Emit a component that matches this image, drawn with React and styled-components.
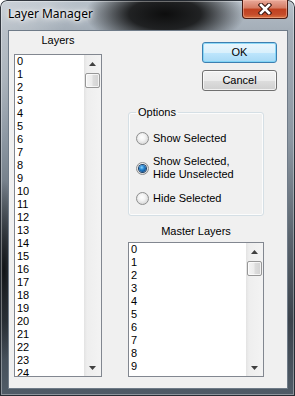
import React from 'react';
import styled, { createGlobalStyle } from 'styled-components';

const Global = createGlobalStyle`
  html, body { margin: 0; padding: 0; background: #ffffff; }
  body { width: 295px; height: 396px; overflow: hidden; }
  * { box-sizing: border-box; }
`;

const Window = styled.div`
  width: 295px;
  height: 396px;
  display: flex;
  flex-direction: column;
  padding: 0 7px 7px 8px;
  border-radius: 7px 7px 0 0;
  box-shadow: inset 0 0 0 1px rgba(20, 26, 34, 0.85), inset 0 0 0 2px rgba(255, 255, 255, 0.35);
  background:
    linear-gradient(118deg, rgba(255,255,255,0.28) 0px, rgba(255,255,255,0.18) 40px, rgba(255,255,255,0) 70px),
    radial-gradient(ellipse 80px 34px at 165px 14px, rgba(8,8,8,0.97) 0%, rgba(8,8,8,0.85) 45%, rgba(8,8,8,0) 100%),
    radial-gradient(ellipse 14px 90px at 4px 270px, rgba(10,12,14,0.9) 0%, rgba(10,12,14,0) 100%),
    linear-gradient(180deg, #b8c1ca 0px, #a4aeb8 30px, #8c97a2 140px, #59636d 240px, #3b434c 320px, #505c68 396px);
  font-family: "Liberation Sans", Arial, sans-serif;
`;

const TitleBar = styled.div`
  height: 30px;
  display: flex;
  justify-content: space-between;
  align-items: flex-start;
  flex-shrink: 0;
`;

const Title = styled.div`
  margin-top: 6px;
  font-family: "Noto Sans", "Open Sans", sans-serif;
  font-size: 12px;
  line-height: 16px;
  color: #000;
  text-shadow: 0 0 6px #fff, 0 0 10px rgba(255,255,255,0.9), 0 0 3px rgba(255,255,255,0.9);
`;

const CloseButton = styled.div`
  width: 46px;
  height: 19px;
  border: 1px solid #4a1a12;
  border-top: none;
  border-radius: 0 0 4px 4px;
  background: linear-gradient(180deg, #e9a99a 0%, #d47a62 45%, #c0401f 50%, #c54b2a 80%, #d9733f 100%);
  box-shadow: inset 0 0 0 1px rgba(255, 200, 180, 0.45);
  display: flex;
  align-items: center;
  justify-content: center;
`;

const Client = styled.div`
  flex: 1;
  background: #f0f0f0;
  border: 1px solid #6f7b88;
  display: flex;
  padding: 3px 9px 0 5px;
`;

const LeftColumn = styled.div`
  width: 88px;
  display: flex;
  flex-direction: column;
`;

const RightColumn = styled.div`
  margin-left: 26px;
  width: 149px;
  display: flex;
  flex-direction: column;
`;

const Label = styled.div`
  font-size: 11px;
  line-height: 13px;
  color: #000;
  text-align: center;
`;

const ListBox = styled.div`
  margin-top: ${p => p.$gap}px;
  height: ${p => p.$h}px;
  width: ${p => p.$w}px;
  border: 1px solid #828790;
  background: #fff;
  display: flex;
  overflow: hidden;
`;

const Items = styled.div`
  flex: 1;
  overflow: hidden;
  padding-left: 2px;
`;

const Item = styled.div`
  font-size: 11px;
  line-height: 13px;
  height: 13px;
  color: #000;
  white-space: nowrap;
`;

const ScrollBar = styled.div`
  width: 17px;
  display: flex;
  flex-direction: column;
  background: linear-gradient(90deg, #e3e3e3 0px, #eeeeee 3px, #f3f3f3 100%);
`;

const ArrowButton = styled.div`
  height: 17px;
  display: flex;
  align-items: center;
  justify-content: center;
  flex-shrink: 0;
`;

const Track = styled.div`
  flex: 1;
  padding: 1px 1px 0 1px;
`;

const Thumb = styled.div`
  height: 15px;
  border: 1px solid #979797;
  border-radius: 2px;
  background: linear-gradient(90deg, #f4f4f4 0%, #ececec 45%, #dcdcdc 55%, #d2d2d2 100%);
  box-shadow: inset 0 0 0 1px rgba(255,255,255,0.7);
`;

const Button = styled.div`
  align-self: flex-end;
  width: 75px;
  height: 21px;
  margin-top: ${p => p.$mt}px;
  border: 1px solid ${p => (p.$default ? '#3c7fb1' : '#707070')};
  border-radius: 3px;
  background: ${p =>
    p.$default
      ? 'linear-gradient(180deg, #eaf6fd 0%, #d9f0fc 50%, #bee6fd 51%, #a7d9f5 100%)'
      : 'linear-gradient(180deg, #f2f2f2 0%, #ebebeb 50%, #dddddd 51%, #cfcfcf 100%)'};
  box-shadow: inset 0 0 0 1px ${p => (p.$default ? 'rgba(120, 210, 245, 0.8)' : 'rgba(255,255,255,0.7)')};
  font-size: 11px;
  line-height: 19px;
  text-align: center;
  color: #000;
`;

const Group = styled.fieldset`
  margin: 15px 0 0 0;
  width: 136px;
  padding: 13px 6px 10px 7px;
  border: 1px solid #d5dfe5;
  border-radius: 3px;
  box-shadow: inset 0 0 0 1px rgba(255,255,255,0.8);
  min-width: 0;
`;

const Legend = styled.legend`
  padding: 0 2px;
  margin-left: 0;
  font-size: 11px;
  line-height: 13px;
  color: #000;
`;

const RadioRow = styled.div`
  display: flex;
  align-items: center;
  gap: 4px;
  margin-top: ${p => p.$mt}px;
`;

const RadioCircle = styled.span`
  width: 13px;
  height: 13px;
  border-radius: 50%;
  flex-shrink: 0;
  border: 1px solid #8e8f8f;
  background: radial-gradient(circle at 45% 40%, #ffffff 0%, #f4f4f4 35%, #dcdcdc 70%, #cfcfcf 100%);
  display: flex;
  align-items: center;
  justify-content: center;
`;

const RadioDot = styled.span`
  width: 7px;
  height: 7px;
  border-radius: 50%;
  background: radial-gradient(circle at 40% 35%, #8fd6ff 0%, #2a8ad4 35%, #0d4f92 75%, #0a2e5c 100%);
  box-shadow: 0 0 0 1px #1c3f66;
`;

const RadioText = styled.span`
  font-size: 11px;
  line-height: 13px;
  color: #000;
`;

const MasterSection = styled.div`
  width: 136px;
  margin-top: 9px;
  display: flex;
  flex-direction: column;
`;

const UpArrow = () => (
  <svg width="7" height="4" viewBox="0 0 7 4">
    <polygon points="3.5,0 7,4 0,4" fill="#404040" />
  </svg>
);

const DownArrow = () => (
  <svg width="7" height="4" viewBox="0 0 7 4">
    <polygon points="0,0 7,0 3.5,4" fill="#404040" />
  </svg>
);

const CloseGlyph = () => (
  <svg width="14" height="12" viewBox="0 0 14 12">
    <path d="M3 2 L11 10 M11 2 L3 10" stroke="#3a1610" strokeWidth="4.6" strokeLinecap="square" fill="none" />
    <path d="M3 2 L11 10 M11 2 L3 10" stroke="#ffffff" strokeWidth="2.6" strokeLinecap="square" fill="none" />
  </svg>
);

const List = ({ count, h, w, gap }) => (
  <ListBox $h={h} $w={w} $gap={gap}>
    <Items>
      {Array.from({ length: count }, (_, i) => (
        <Item key={i}>{i}</Item>
      ))}
    </Items>
    <ScrollBar>
      <ArrowButton>
        <UpArrow />
      </ArrowButton>
      <Track>
        <Thumb />
      </Track>
      <ArrowButton>
        <DownArrow />
      </ArrowButton>
    </ScrollBar>
  </ListBox>
);

const Radio = ({ checked, children, mt }) => (
  <RadioRow $mt={mt}>
    <RadioCircle>{checked && <RadioDot />}</RadioCircle>
    <RadioText>{children}</RadioText>
  </RadioRow>
);

export default function App() {
  return (
    <>
      <Global />
      <Window>
        <TitleBar>
          <Title>Layer Manager</Title>
          <CloseButton>
            <CloseGlyph />
          </CloseButton>
        </TitleBar>
        <Client>
          <LeftColumn>
            <Label>Layers</Label>
            <List count={25} h={323} w={88} gap={7} />
          </LeftColumn>
          <RightColumn>
            <Button $default $mt={8}>OK</Button>
            <Button $mt={7}>Cancel</Button>
            <Group>
              <Legend>Options</Legend>
              <Radio mt={0}>Show Selected</Radio>
              <Radio checked mt={10}>
                Show Selected,
                <br />
                Hide Unselected
              </Radio>
              <Radio mt={11}>Hide Selected</Radio>
            </Group>
            <MasterSection>
              <Label>Master Layers</Label>
              <List count={10} h={135} w={136} gap={4} />
            </MasterSection>
          </RightColumn>
        </Client>
      </Window>
    </>
  );
}
